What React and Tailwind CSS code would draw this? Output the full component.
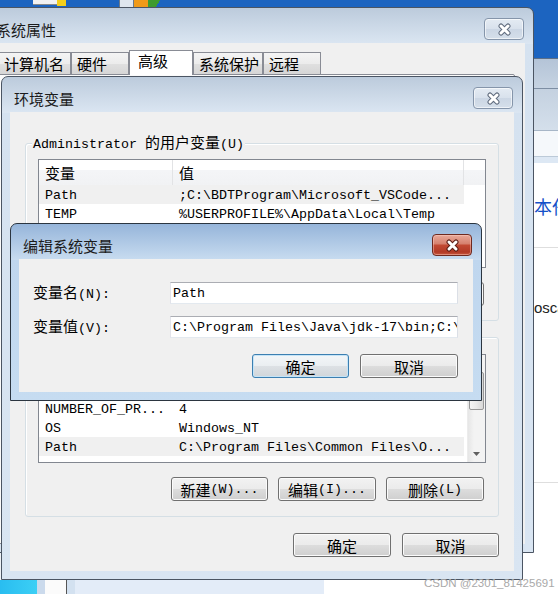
import React from "react";

// split text into CJK / latin runs: latin is SimSun-like mono, CJK is full width
const CJK = /([\u2e80-\u9fff\uff00-\uffef]+)/;

const T = ({ s }) =>
  s
    .split(CJK)
    .filter(Boolean)
    .map((part, i) =>
      CJK.test(part) ? (
        <span key={i} className="font-['Noto_Sans_CJK_SC',sans-serif] text-[15px]">
          {part}
        </span>
      ) : (
        <span key={i} className="font-['Liberation_Mono',monospace] text-[13.33px]">
          {part}
        </span>
      )
    );

const userRows = [
  ["Path", ";C:\\BDTProgram\\Microsoft_VSCode..."],
  ["TEMP", "%USERPROFILE%\\AppData\\Local\\Temp"],
  ["TMP", "%USERPROFILE%\\AppData\\Local\\Temp"],
];

const sysRows = [
  ["ComSpec", "%SystemRoot%\\system32\\cmd.exe"],
  ["NUMBER_OF_PR...", "4"],
  ["OS", "Windows_NT"],
  ["Path", "C:\\Program Files\\Common Files\\O..."],
];

const XMark = ({ outline }) => (
  <svg width="15" height="13" viewBox="0 0 15 13">
    <path d="M4 3 L11 10 M11 3 L4 10" stroke={outline} strokeWidth="5" strokeLinecap="round" fill="none" />
    <path d="M4 3 L11 10 M11 3 L4 10" stroke="#fff" strokeWidth="3" strokeLinecap="round" fill="none" />
  </svg>
);

const CloseBtn = ({ red }) => (
  <div
    className={`mr-[9px] mt-[10px] flex h-[22px] w-[40px] shrink-0 items-center justify-center rounded-[4px] border ${
      red
        ? "border-[#6e2a20] bg-[linear-gradient(#e9a99a,#d5806d_45%,#c24a34_50%,#b23a26_85%,#c8583f)] shadow-[inset_0_0_0_1px_rgba(255,210,200,0.45)]"
        : "border-[#8595aa] bg-[linear-gradient(#e4ebf3,#d8e1ec_50%,#cbd6e4_50%,#d5dfea)] shadow-[inset_0_0_0_1px_rgba(255,255,255,0.6)]"
    }`}
  >
    <XMark outline={red ? "#5a1d15" : "#5e6a7c"} />
  </div>
);

const Win = ({ title, active, className, children }) => (
  <div
    className={`absolute flex flex-col rounded-t-[7px] border ${
      active
        ? "border-[#2b3540] bg-[linear-gradient(#96b5da,#c8dcf0_36px,#bfd6ee_36px,#c6dcf1)]"
        : "border-[#4b5563] bg-[linear-gradient(#bccbdc,#dbe6f2_36px,#d5e2f0_36px,#d9e5f2)]"
    } ${className}`}
  >
    <div className="flex h-[35px] shrink-0 items-start justify-between">
      <div className="whitespace-nowrap pl-[12px] pt-[12px] leading-[19px] text-[#1b1b1b]">
        <T s={title} />
      </div>
      <CloseBtn red={active} />
    </div>
    <div className="mx-[8px] mb-[8px] flex-1 overflow-hidden bg-[#f0f0f0]">{children}</div>
  </div>
);

const Btn = ({ label, focus, className }) => (
  <div
    className={`flex h-[24px] items-center justify-center whitespace-nowrap rounded-[3px] border leading-[19px] ${
      focus
        ? "border-[#3c7fb1] bg-[linear-gradient(#f3f6f8,#eaeef1_50%,#dde1e5_50%,#d1d6da)] shadow-[inset_0_0_0_1px_#c5e4f7]"
        : "border-[#707070] bg-[linear-gradient(#f2f2f2,#ebebeb_50%,#dddddd_50%,#cfcfcf)] shadow-[inset_0_0_0_1px_#fbfbfb]"
    } ${className}`}
  >
    <T s={label} />
  </div>
);

const Input = ({ value }) => (
  <div className="flex h-[22px] flex-1 items-center overflow-hidden whitespace-nowrap border border-[#abadb3] border-b-[#e3e9ef] border-l-[#e2e3ea] border-r-[#dbdfe6] bg-white pl-[2px] leading-[19px]">
    <T s={value} />
  </div>
);

const Group = ({ label, className, children }) => (
  <div className={`relative rounded-[3px] border border-[#d5dfe5] shadow-[inset_1px_1px_0_#fff] ${className}`}>
    <div className="absolute -top-[12px] left-[6px] whitespace-nowrap bg-[#f0f0f0] px-px leading-[19px]">
      <T s={label} />
    </div>
    {children}
  </div>
);

const ScrollBar = () => (
  <div className="flex w-[18px] flex-col border-l border-[#ececec] bg-[linear-gradient(90deg,#e6e6e6,#f3f3f3_35%,#f3f3f3)]">
    <div className="flex h-[17px] items-center justify-center">
      <svg width="7" height="4" viewBox="0 0 7 4">
        <path d="M0 4 L3.5 0 L7 4 Z" fill="#606060" />
      </svg>
    </div>
    <div className="mx-px flex h-[38px] items-center justify-center rounded-[2px] border border-[#979797] bg-[linear-gradient(90deg,#f4f4f4,#e9e9e9_50%,#d8d8d8)]">
      <div className="h-[5px] w-[7px] border-y border-[#9a9a9a]" />
    </div>
    <div className="flex-1" />
    <div className="flex h-[17px] items-center justify-center">
      <svg width="7" height="4" viewBox="0 0 7 4">
        <path d="M0 0 L7 0 L3.5 4 Z" fill="#606060" />
      </svg>
    </div>
  </div>
);

const ListView = ({ rows, hl, scroll, className }) => (
  <div className={`flex h-[109px] w-[448px] overflow-hidden border border-[#828790] bg-white ${className}`}>
    <div className="flex-1 overflow-hidden">
      <div className="flex h-[25px] items-center bg-[linear-gradient(#ffffff,#ffffff_42%,#f4f5f7_42%,#f1f2f4)] leading-[19px]">
        <div className="flex h-full w-[134px] items-center border-r border-[#e2e3e5] pl-[6px]">
          <T s="变量" />
        </div>
        <div className="flex h-full w-[291px] items-center border-r border-[#e2e3e5] pl-[6px]">
          <T s="值" />
        </div>
      </div>
      {rows.map(([name, val], i) => (
        <div
          key={i}
          className={`flex h-[19px] w-[425px] items-center whitespace-nowrap leading-[19px] ${
            i === hl ? "bg-[#f0f0f0]" : ""
          }`}
        >
          <div className="w-[134px] overflow-hidden pl-[6px]">
            <T s={name} />
          </div>
          <div className="w-[291px] overflow-hidden pl-[6px]">
            <T s={val} />
          </div>
        </div>
      ))}
    </div>
    {scroll && <ScrollBar />}
  </div>
);

const tabs = [
  { label: "计算机名", w: "w-[73px]" },
  { label: "硬件", w: "w-[58px]" },
  { label: "高级", w: "w-[64px]", active: true },
  { label: "系统保护", w: "w-[70px]" },
  { label: "远程", w: "w-[58px]" },
];

export default function App() {
  return (
    <div className="relative h-[594px] w-[558px] overflow-hidden bg-[#1c64c0] font-['Liberation_Sans',sans-serif] text-black">
      {/* desktop icons peeking at the top */}
      <div className="absolute left-[33px] top-0 h-[5px] w-[25px] border-b border-[#8a8a8a] bg-[#f2f2f2]" />
      <div className="absolute left-[57px] top-0 h-[6px] w-[9px] bg-[#f4cf1a]" />
      <div className="absolute left-[119px] top-0 h-[8px] w-[15px] border-x border-b border-[#6b7a8c] bg-[#dfe6ee]" />
      <div className="absolute left-[134px] top-0 h-[8px] w-[14px] bg-[#f09a18]" />
      <div className="absolute left-[148px] top-0 h-[8px] w-[22px] bg-[linear-gradient(120deg,#3e9b2f_45%,transparent_45%)]" />

      {/* window behind on the right */}
      <div className="absolute left-[520px] top-[58px] flex h-[540px] w-[60px] flex-col border-t border-[#5c6f88]">
        <div className="h-[30px] border-b border-[#7d8ea3] bg-[linear-gradient(#b4c4d7,#c6d3e2)]" />
        <div className="h-[42px] border-b border-[#a7b6c7] bg-[linear-gradient(#c4d1e0,#d4dfeb)]" />
        <div className="h-[26px] border-b border-[#bccad8] bg-[#f5f8fb]" />
        <div className="h-[6px] bg-[#dde8f4]" />
        <div className="flex-1 bg-white">
          <div className="whitespace-nowrap pl-[14px] pt-[31px] font-['Noto_Sans_CJK_SC',sans-serif] text-[18px] leading-[24px] text-[#1450c8]">
            本任务
          </div>
          <div className="h-[30px] border-b border-[#dedede]" />
          <div className="mt-[51px] whitespace-nowrap pl-[14px] text-[15px] leading-[18px] text-[#222]">oscar</div>
          <div className="mt-[165px] border-t border-[#dedede]" />
        </div>
      </div>

      {/* bits of other windows along the bottom and left edge */}
      <div className="absolute left-0 top-[552px] h-[28px] w-[2px] bg-[#eef2f7]" />
      <div className="absolute left-0 top-[580px] flex h-[14px] w-full">
        <div className="w-[37px] bg-[linear-gradient(90deg,#29bdf0,#3ccff5)]" />
        <div className="w-[8px] bg-[#cbdaec]" />
        <div className="w-[21px] bg-[#fbfbfb]" />
        <div className="w-px bg-[#555555]" />
        <div className="w-[8px] bg-[#d3e1f0]" />
        <div className="w-[249px] bg-[#e3ecf8]" />
        <div className="flex-1 whitespace-nowrap bg-white pl-[65px] pt-[11px] leading-[19px]">
          <T s="时区设置" />
        </div>
      </div>

      {/* 系统属性 */}
      <Win title="系统属性" className="left-[-17px] top-[7px] h-[546px] w-[551px]">
        <div className="flex h-full flex-col">
          <div className="relative z-10 ml-[6px] mt-[7px] flex h-[24px] items-end">
            {tabs.map((t) =>
              t.active ? (
                <div
                  key={t.label}
                  className={`-mb-px flex h-[25px] items-start border border-b-0 border-[#898c95] bg-white pl-[8px] leading-[19px] ${t.w}`}
                >
                  <T s={t.label} />
                </div>
              ) : (
                <div
                  key={t.label}
                  className={`flex h-[22px] items-center border border-b-0 border-[#898c95] bg-[linear-gradient(#f4f4f4,#ececec_50%,#e0e0e0_50%,#d6d6d6)] pl-[5px] leading-[19px] ${t.w}`}
                >
                  <T s={t.label} />
                </div>
              )
            )}
          </div>
          <div className="ml-[6px] mr-[10px] flex-1 rounded-tr-[2px] border border-[#898c95] bg-[#fbfbfb]" />
        </div>
      </Win>

      {/* 环境变量 */}
      <Win title="环境变量" className="left-[1px] top-[76px] h-[504px] w-[522px]">
        <div className="flex flex-col px-[15px]">
          <Group label="Administrator 的用户变量(U)" className="mt-[31px] h-[178px]">
            <ListView className="ml-[12px] mt-[15px]" rows={userRows} hl={0} />
            <div className="mt-[14px] flex justify-end gap-[10px] pr-[14px]">
              <Btn className="w-[97px]" label="新建(N)..." />
              <Btn className="w-[98px]" label="编辑(E)..." />
              <Btn className="w-[98px]" label="删除(D)" />
            </div>
          </Group>
          <Group label="系统变量(S)" className="mt-[16px] h-[180px]">
            <ListView className="ml-[12px] mt-[16px]" rows={sysRows} hl={3} scroll />
            <div className="mt-[14px] flex justify-end gap-[10px] pr-[14px]">
              <Btn className="w-[97px]" label="新建(W)..." />
              <Btn className="w-[98px]" label="编辑(I)..." />
              <Btn className="w-[98px]" label="删除(L)" />
            </div>
          </Group>
          <div className="mt-[16px] flex justify-end gap-[11px]">
            <Btn className="w-[98px]" label="确定" />
            <Btn className="w-[97px]" label="取消" />
          </div>
        </div>
      </Win>

      {/* 编辑系统变量 */}
      <Win title="编辑系统变量" active className="left-[10px] top-[223px] h-[178px] w-[472px]">
        <div className="flex flex-col pl-[14px] pr-[15px] pt-[23px]">
          <div className="flex h-[22px] items-center">
            <div className="w-[137px] whitespace-nowrap leading-[19px]">
              <T s="变量名(N):" />
            </div>
            <Input value="Path" />
          </div>
          <div className="mt-[12px] flex h-[22px] items-center">
            <div className="w-[137px] whitespace-nowrap leading-[19px]">
              <T s="变量值(V):" />
            </div>
            <Input value={"C:\\Program Files\\Java\\jdk-17\\bin;C:\\Program Files\\Common Files"} />
          </div>
          <div className="mt-[16px] flex justify-end gap-[11px]">
            <Btn focus className="w-[97px]" label="确定" />
            <Btn className="w-[98px]" label="取消" />
          </div>
        </div>
      </Win>

      <div className="absolute left-[424px] top-[576px] whitespace-nowrap text-[11.5px] leading-[14px] text-[#a9a9a9]">
        CSDN @2301_81425691
      </div>
    </div>
  );
}
